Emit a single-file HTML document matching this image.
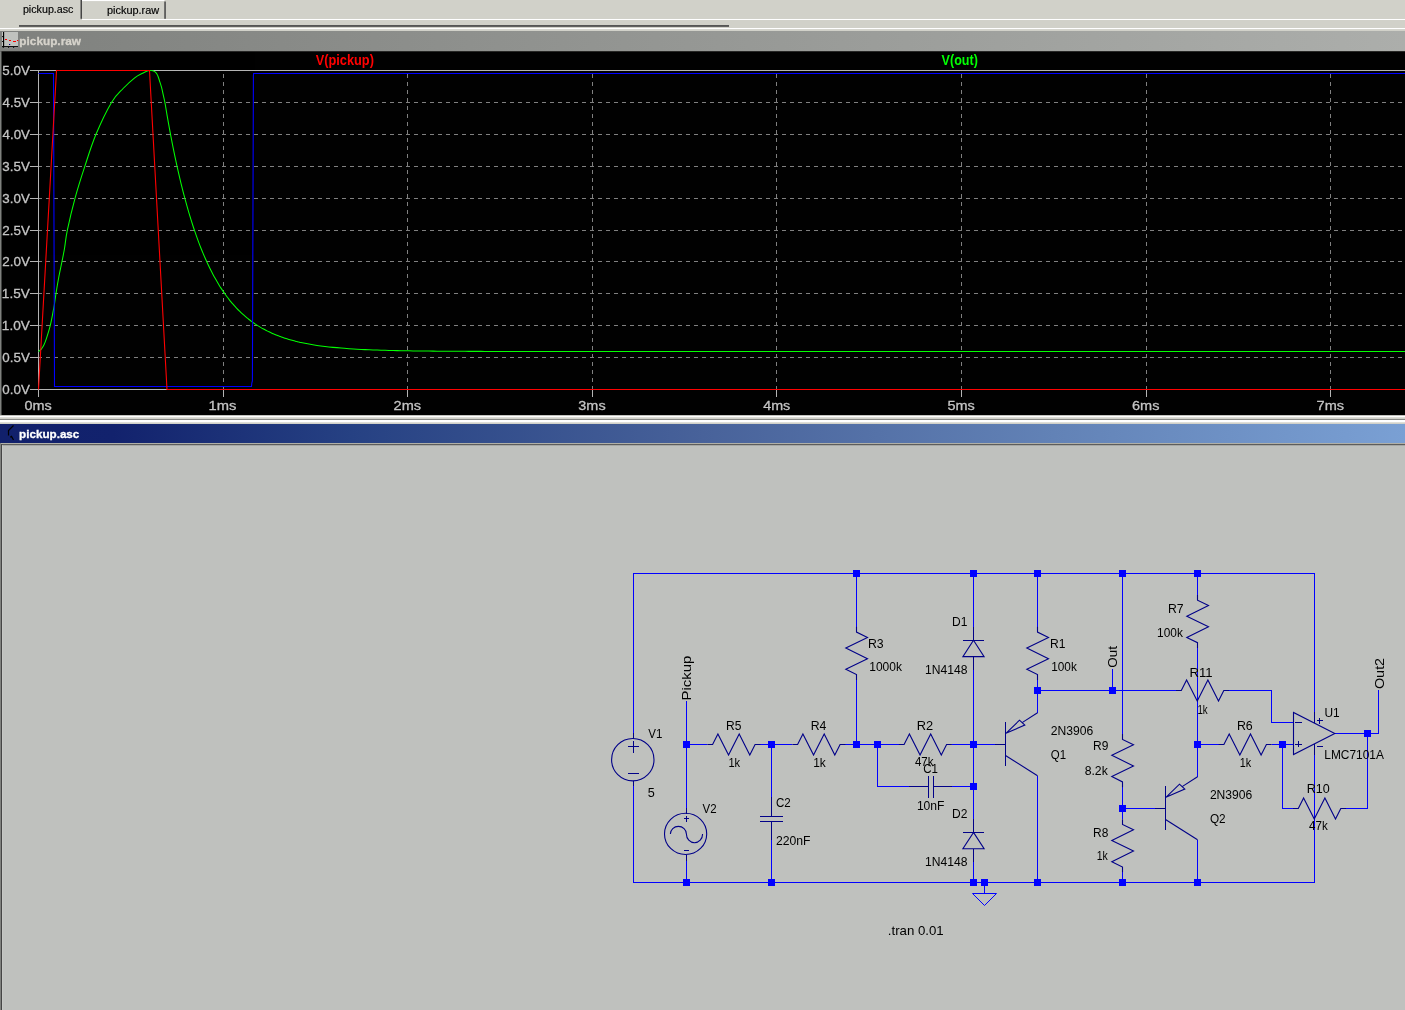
<!DOCTYPE html>
<html lang="en"><head><meta charset="utf-8"><title>LTspice IV - pickup.asc</title>
<style>
html,body{margin:0;padding:0;background:#d1d1c9;overflow:hidden}
body{width:1405px;height:1010px}
svg{display:block;font-family:"Liberation Sans",sans-serif;will-change:transform;opacity:0.9999}
</style></head><body>
<svg width="1405" height="1010" viewBox="0 0 1405 1010">
<defs>
<linearGradient id="gGray" x1="0" x2="1" y1="0" y2="0"><stop offset="0" stop-color="#7f817e"/><stop offset="1" stop-color="#acaeab"/></linearGradient>
<linearGradient id="gBlue" x1="0" x2="1" y1="0" y2="0"><stop offset="0" stop-color="#11206b"/><stop offset="0.08" stop-color="#12226d"/><stop offset="0.25" stop-color="#264183"/><stop offset="0.5" stop-color="#48629a"/><stop offset="0.75" stop-color="#6282b6"/><stop offset="1" stop-color="#7aa0d4"/></linearGradient>
</defs>
<rect x="0.00" y="0.00" width="1405.00" height="1010.00" fill="#d1d1c9"/>
<text x="22.92" y="13.00" font-size="11" fill="#000" textLength="50.56" lengthAdjust="spacingAndGlyphs" stroke="#000" stroke-width="0.15">pickup.asc</text>
<text x="107.00" y="14.00" font-size="11" fill="#000" textLength="52.16" lengthAdjust="spacingAndGlyphs" stroke="#000" stroke-width="0.15">pickup.raw</text>
<rect x="80.50" y="0.00" width="1.50" height="18.80" fill="#454545"/>
<rect x="82.00" y="0.00" width="82.50" height="1.10" fill="#ffffff"/>
<rect x="164.30" y="1.50" width="1.50" height="17.30" fill="#454545"/>
<rect x="82.00" y="19.00" width="1323.00" height="1.00" fill="#ffffff"/>
<rect x="19.00" y="25.10" width="710.00" height="1.70" fill="#484848"/>
<rect x="0.00" y="28.00" width="1405.00" height="1.10" fill="#ffffff"/>
<rect x="0.00" y="31.00" width="1405.00" height="20.20" fill="url(#gGray)"/>
<rect x="4.20" y="32.00" width="13.80" height="14.20" fill="#c0c2be"/>
<rect x="2.00" y="32.00" width="1.00" height="14.00" fill="#c0c2be"/>
<rect x="4.00" y="47.20" width="14.00" height="0.90" fill="#b0b2ae"/>
<rect x="3.00" y="32.00" width="1.10" height="15.60" fill="#000"/>
<rect x="2.00" y="46.10" width="16.00" height="1.10" fill="#000"/>
<rect x="2.00" y="36.20" width="1.20" height="0.90" fill="#000"/>
<rect x="2.00" y="41.00" width="1.20" height="0.90" fill="#000"/>
<rect x="8.20" y="47.00" width="0.90" height="1.00" fill="#000"/>
<rect x="13.20" y="47.00" width="0.90" height="1.00" fill="#000"/>
<rect x="5.00" y="39.00" width="2.00" height="1.00" fill="#ff0000"/>
<rect x="9.00" y="40.00" width="2.00" height="1.00" fill="#ff0000"/>
<rect x="13.00" y="41.00" width="3.00" height="1.00" fill="#ff0000"/>
<rect x="17.00" y="40.00" width="1.20" height="1.00" fill="#ff0000"/>
<rect x="9.00" y="44.00" width="1.20" height="1.00" fill="#000080"/>
<text x="19.33" y="45.20" font-size="11.5" fill="#d6d3cb" font-weight="bold" textLength="61.64" lengthAdjust="spacingAndGlyphs" stroke="#d6d3cb" stroke-width="0.3">pickup.raw</text>
<rect x="0.00" y="51.20" width="1405.00" height="364.10" fill="#000"/>
<rect x="0.00" y="51.20" width="1.50" height="364.10" fill="#7f817e"/>
<line x1="223.50" y1="74.00" x2="223.50" y2="389.00" stroke="#808080" stroke-width="1" shape-rendering="crispEdges" stroke-dasharray="4 4"/>
<line x1="223.50" y1="389.50" x2="223.50" y2="396.80" stroke="#b4b4b4" stroke-width="1" shape-rendering="crispEdges"/>
<line x1="407.50" y1="74.00" x2="407.50" y2="389.00" stroke="#808080" stroke-width="1" shape-rendering="crispEdges" stroke-dasharray="4 4"/>
<line x1="407.50" y1="389.50" x2="407.50" y2="396.80" stroke="#b4b4b4" stroke-width="1" shape-rendering="crispEdges"/>
<line x1="592.50" y1="74.00" x2="592.50" y2="389.00" stroke="#808080" stroke-width="1" shape-rendering="crispEdges" stroke-dasharray="4 4"/>
<line x1="592.50" y1="389.50" x2="592.50" y2="396.80" stroke="#b4b4b4" stroke-width="1" shape-rendering="crispEdges"/>
<line x1="776.50" y1="74.00" x2="776.50" y2="389.00" stroke="#808080" stroke-width="1" shape-rendering="crispEdges" stroke-dasharray="4 4"/>
<line x1="776.50" y1="389.50" x2="776.50" y2="396.80" stroke="#b4b4b4" stroke-width="1" shape-rendering="crispEdges"/>
<line x1="961.50" y1="74.00" x2="961.50" y2="389.00" stroke="#808080" stroke-width="1" shape-rendering="crispEdges" stroke-dasharray="4 4"/>
<line x1="961.50" y1="389.50" x2="961.50" y2="396.80" stroke="#b4b4b4" stroke-width="1" shape-rendering="crispEdges"/>
<line x1="1146.50" y1="74.00" x2="1146.50" y2="389.00" stroke="#808080" stroke-width="1" shape-rendering="crispEdges" stroke-dasharray="4 4"/>
<line x1="1146.50" y1="389.50" x2="1146.50" y2="396.80" stroke="#b4b4b4" stroke-width="1" shape-rendering="crispEdges"/>
<line x1="1330.50" y1="74.00" x2="1330.50" y2="389.00" stroke="#808080" stroke-width="1" shape-rendering="crispEdges" stroke-dasharray="4 4"/>
<line x1="1330.50" y1="389.50" x2="1330.50" y2="396.80" stroke="#b4b4b4" stroke-width="1" shape-rendering="crispEdges"/>
<line x1="38.00" y1="357.50" x2="1405.00" y2="357.50" stroke="#808080" stroke-width="1" shape-rendering="crispEdges" stroke-dasharray="4 4"/>
<line x1="38.00" y1="325.50" x2="1405.00" y2="325.50" stroke="#808080" stroke-width="1" shape-rendering="crispEdges" stroke-dasharray="4 4"/>
<line x1="38.00" y1="293.50" x2="1405.00" y2="293.50" stroke="#808080" stroke-width="1" shape-rendering="crispEdges" stroke-dasharray="4 4"/>
<line x1="38.00" y1="261.50" x2="1405.00" y2="261.50" stroke="#808080" stroke-width="1" shape-rendering="crispEdges" stroke-dasharray="4 4"/>
<line x1="38.00" y1="230.50" x2="1405.00" y2="230.50" stroke="#808080" stroke-width="1" shape-rendering="crispEdges" stroke-dasharray="4 4"/>
<line x1="38.00" y1="198.50" x2="1405.00" y2="198.50" stroke="#808080" stroke-width="1" shape-rendering="crispEdges" stroke-dasharray="4 4"/>
<line x1="38.00" y1="166.50" x2="1405.00" y2="166.50" stroke="#808080" stroke-width="1" shape-rendering="crispEdges" stroke-dasharray="4 4"/>
<line x1="38.00" y1="134.50" x2="1405.00" y2="134.50" stroke="#808080" stroke-width="1" shape-rendering="crispEdges" stroke-dasharray="4 4"/>
<line x1="38.00" y1="102.50" x2="1405.00" y2="102.50" stroke="#808080" stroke-width="1" shape-rendering="crispEdges" stroke-dasharray="4 4"/>
<line x1="30.30" y1="389.50" x2="38.50" y2="389.50" stroke="#b4b4b4" stroke-width="1" shape-rendering="crispEdges"/>
<text x="2.38" y="393.70" font-size="13.2" fill="#c4c4c4" textLength="27.48" lengthAdjust="spacingAndGlyphs" stroke="#c4c4c4" stroke-width="0.3">0.0V</text>
<line x1="30.30" y1="357.50" x2="38.50" y2="357.50" stroke="#b4b4b4" stroke-width="1" shape-rendering="crispEdges"/>
<text x="2.38" y="361.70" font-size="13.2" fill="#c4c4c4" textLength="27.48" lengthAdjust="spacingAndGlyphs" stroke="#c4c4c4" stroke-width="0.3">0.5V</text>
<line x1="30.30" y1="325.50" x2="38.50" y2="325.50" stroke="#b4b4b4" stroke-width="1" shape-rendering="crispEdges"/>
<text x="1.87" y="329.70" font-size="13.2" fill="#c4c4c4" textLength="27.99" lengthAdjust="spacingAndGlyphs" stroke="#c4c4c4" stroke-width="0.3">1.0V</text>
<line x1="30.30" y1="293.50" x2="38.50" y2="293.50" stroke="#b4b4b4" stroke-width="1" shape-rendering="crispEdges"/>
<text x="1.87" y="297.70" font-size="13.2" fill="#c4c4c4" textLength="27.99" lengthAdjust="spacingAndGlyphs" stroke="#c4c4c4" stroke-width="0.3">1.5V</text>
<line x1="30.30" y1="261.50" x2="38.50" y2="261.50" stroke="#b4b4b4" stroke-width="1" shape-rendering="crispEdges"/>
<text x="2.23" y="265.70" font-size="13.2" fill="#c4c4c4" textLength="27.63" lengthAdjust="spacingAndGlyphs" stroke="#c4c4c4" stroke-width="0.3">2.0V</text>
<line x1="30.30" y1="230.50" x2="38.50" y2="230.50" stroke="#b4b4b4" stroke-width="1" shape-rendering="crispEdges"/>
<text x="2.23" y="234.70" font-size="13.2" fill="#c4c4c4" textLength="27.63" lengthAdjust="spacingAndGlyphs" stroke="#c4c4c4" stroke-width="0.3">2.5V</text>
<line x1="30.30" y1="198.50" x2="38.50" y2="198.50" stroke="#b4b4b4" stroke-width="1" shape-rendering="crispEdges"/>
<text x="2.39" y="202.70" font-size="13.2" fill="#c4c4c4" textLength="27.46" lengthAdjust="spacingAndGlyphs" stroke="#c4c4c4" stroke-width="0.3">3.0V</text>
<line x1="30.30" y1="166.50" x2="38.50" y2="166.50" stroke="#b4b4b4" stroke-width="1" shape-rendering="crispEdges"/>
<text x="2.39" y="170.70" font-size="13.2" fill="#c4c4c4" textLength="27.46" lengthAdjust="spacingAndGlyphs" stroke="#c4c4c4" stroke-width="0.3">3.5V</text>
<line x1="30.30" y1="134.50" x2="38.50" y2="134.50" stroke="#b4b4b4" stroke-width="1" shape-rendering="crispEdges"/>
<text x="2.61" y="138.70" font-size="13.2" fill="#c4c4c4" textLength="27.25" lengthAdjust="spacingAndGlyphs" stroke="#c4c4c4" stroke-width="0.3">4.0V</text>
<line x1="30.30" y1="102.50" x2="38.50" y2="102.50" stroke="#b4b4b4" stroke-width="1" shape-rendering="crispEdges"/>
<text x="2.61" y="106.70" font-size="13.2" fill="#c4c4c4" textLength="27.25" lengthAdjust="spacingAndGlyphs" stroke="#c4c4c4" stroke-width="0.3">4.5V</text>
<line x1="30.30" y1="70.50" x2="38.50" y2="70.50" stroke="#b4b4b4" stroke-width="1" shape-rendering="crispEdges"/>
<text x="2.37" y="74.70" font-size="13.2" fill="#c4c4c4" textLength="27.49" lengthAdjust="spacingAndGlyphs" stroke="#c4c4c4" stroke-width="0.3">5.0V</text>
<line x1="38.50" y1="70.00" x2="38.50" y2="396.80" stroke="#b4b4b4" stroke-width="1" shape-rendering="crispEdges"/>
<line x1="38.00" y1="70.50" x2="1405.00" y2="70.50" stroke="#b4b4b4" stroke-width="1" shape-rendering="crispEdges"/>
<line x1="38.00" y1="389.50" x2="1405.00" y2="389.50" stroke="#b4b4b4" stroke-width="1" shape-rendering="crispEdges"/>
<text x="24.54" y="409.70" font-size="13.2" fill="#c4c4c4" textLength="27.29" lengthAdjust="spacingAndGlyphs" stroke="#c4c4c4" stroke-width="0.3">0ms</text>
<text x="208.58" y="409.70" font-size="13.2" fill="#c4c4c4" textLength="27.85" lengthAdjust="spacingAndGlyphs" stroke="#c4c4c4" stroke-width="0.3">1ms</text>
<text x="393.57" y="409.70" font-size="13.2" fill="#c4c4c4" textLength="27.45" lengthAdjust="spacingAndGlyphs" stroke="#c4c4c4" stroke-width="0.3">2ms</text>
<text x="578.35" y="409.70" font-size="13.2" fill="#c4c4c4" textLength="27.27" lengthAdjust="spacingAndGlyphs" stroke="#c4c4c4" stroke-width="0.3">3ms</text>
<text x="763.19" y="409.70" font-size="13.2" fill="#c4c4c4" textLength="27.03" lengthAdjust="spacingAndGlyphs" stroke="#c4c4c4" stroke-width="0.3">4ms</text>
<text x="947.52" y="409.70" font-size="13.2" fill="#c4c4c4" textLength="27.30" lengthAdjust="spacingAndGlyphs" stroke="#c4c4c4" stroke-width="0.3">5ms</text>
<text x="1131.97" y="409.70" font-size="13.2" fill="#c4c4c4" textLength="27.45" lengthAdjust="spacingAndGlyphs" stroke="#c4c4c4" stroke-width="0.3">6ms</text>
<text x="1316.56" y="409.70" font-size="13.2" fill="#c4c4c4" textLength="27.47" lengthAdjust="spacingAndGlyphs" stroke="#c4c4c4" stroke-width="0.3">7ms</text>
<path d="M38.50,351.60 C38.97,351.20 40.38,350.33 41.30,349.20 C42.22,348.07 43.10,346.73 44.00,344.80 C44.90,342.87 45.65,340.85 46.70,337.60 C47.75,334.35 49.27,329.45 50.30,325.30 C51.33,321.15 52.20,316.28 52.90,312.70 C53.60,309.12 53.98,307.03 54.50,303.80 C55.02,300.57 55.28,297.77 56.00,293.30 C56.72,288.83 57.80,282.32 58.80,277.00 C59.80,271.68 61.05,266.15 62.00,261.40 C62.95,256.65 63.62,253.67 64.50,248.50 C65.38,243.33 65.55,238.77 67.30,230.40 C69.05,222.03 72.08,208.97 75.00,198.30 C77.92,187.63 81.30,177.07 84.80,166.40 C88.30,155.73 91.55,144.97 96.00,134.30 C100.45,123.63 106.98,110.03 111.50,102.40 C116.02,94.77 119.23,92.60 123.10,88.50 C126.97,84.40 131.43,80.35 134.70,77.80 C137.97,75.25 140.48,74.37 142.70,73.20 C144.92,72.03 146.70,71.25 148.00,70.80 C149.30,70.35 149.67,70.50 150.50,70.50 C151.33,70.50 152.07,70.42 153.00,70.80 C153.93,71.18 155.28,71.93 156.10,72.80 C156.92,73.67 157.35,74.72 157.90,76.00 C158.45,77.28 158.80,78.63 159.40,80.50 C160.00,82.37 160.82,84.62 161.50,87.20 C162.18,89.78 162.92,93.37 163.50,96.00 C164.08,98.63 164.42,99.87 165.00,103.01 C165.58,106.15 166.33,110.99 167.00,114.84 C167.67,118.69 168.33,122.44 169.00,126.10 C169.67,129.77 170.33,133.34 171.00,136.84 C171.67,140.33 172.33,143.73 173.00,147.06 C173.67,150.38 174.33,153.62 175.00,156.79 C175.67,159.96 176.33,163.04 177.00,166.06 C177.67,169.08 178.33,172.02 179.00,174.89 C179.67,177.76 180.33,180.56 181.00,183.30 C181.67,186.03 182.33,188.70 183.00,191.31 C183.67,193.91 184.33,196.45 185.00,198.93 C185.67,201.41 186.33,203.83 187.00,206.20 C187.67,208.56 188.33,210.86 189.00,213.11 C189.67,215.36 190.33,217.56 191.00,219.70 C191.67,221.85 192.33,223.94 193.00,225.98 C193.67,228.02 194.33,230.01 195.00,231.95 C195.67,233.90 196.33,235.79 197.00,237.64 C197.67,239.50 198.33,241.30 199.00,243.07 C199.67,244.83 200.33,246.55 201.00,248.23 C201.67,249.91 202.33,251.54 203.00,253.14 C203.67,254.74 204.33,256.30 205.00,257.83 C205.67,259.35 206.33,260.84 207.00,262.29 C207.67,263.74 208.33,265.15 209.00,266.53 C209.67,267.92 210.33,269.26 211.00,270.58 C211.67,271.90 212.33,273.18 213.00,274.43 C213.67,275.69 214.33,276.91 215.00,278.10 C215.67,279.30 216.33,280.46 217.00,281.60 C217.67,282.73 218.33,283.84 219.00,284.92 C219.67,286.01 220.33,287.06 221.00,288.09 C221.67,289.13 222.33,290.13 223.00,291.11 C223.67,292.09 224.33,293.05 225.00,293.99 C225.67,294.92 226.33,295.83 227.00,296.73 C227.67,297.62 228.33,298.48 229.00,299.33 C229.67,300.18 230.33,301.01 231.00,301.82 C231.67,302.63 232.33,303.41 233.00,304.18 C233.67,304.95 234.33,305.70 235.00,306.44 C235.67,307.17 236.33,307.88 237.00,308.58 C237.67,309.28 238.33,309.96 239.00,310.62 C239.67,311.29 240.33,311.94 241.00,312.57 C241.67,313.20 242.33,313.82 243.00,314.42 C243.67,315.03 244.33,315.61 245.00,316.19 C245.67,316.76 246.33,317.32 247.00,317.87 C247.67,318.42 248.33,318.95 249.00,319.47 C249.67,319.99 250.33,320.50 251.00,321.00 C251.67,321.49 252.33,321.98 253.00,322.45 C253.67,322.92 254.33,323.38 255.00,323.83 C255.67,324.28 256.33,324.72 257.00,325.15 C257.67,325.58 258.33,326.00 259.00,326.40 C259.67,326.81 260.33,327.21 261.00,327.60 C261.67,327.99 262.33,328.37 263.00,328.74 C263.67,329.11 264.33,329.47 265.00,329.82 C265.67,330.17 266.33,330.52 267.00,330.85 C267.67,331.19 268.33,331.52 269.00,331.84 C269.67,332.16 270.33,332.47 271.00,332.77 C271.67,333.08 272.33,333.37 273.00,333.66 C273.67,333.95 274.33,334.24 275.00,334.51 C275.67,334.79 276.33,335.06 277.00,335.32 C277.67,335.58 278.33,335.84 279.00,336.09 C279.67,336.34 280.33,336.59 281.00,336.82 C281.67,337.06 282.33,337.30 283.00,337.52 C283.67,337.75 284.33,337.97 285.00,338.19 C285.67,338.41 286.33,338.62 287.00,338.82 C287.67,339.03 288.33,339.23 289.00,339.43 C289.67,339.62 290.33,339.81 291.00,340.00 C291.67,340.19 292.33,340.37 293.00,340.55 C293.67,340.73 294.33,340.90 295.00,341.07 C295.67,341.24 296.33,341.41 297.00,341.57 C297.67,341.73 298.33,341.89 299.00,342.04 C299.67,342.19 299.33,342.15 301.00,342.49 C302.67,342.83 306.33,343.60 309.00,344.09 C311.67,344.57 314.33,345.00 317.00,345.40 C319.67,345.80 322.33,346.15 325.00,346.48 C327.67,346.81 330.33,347.10 333.00,347.37 C335.67,347.64 338.33,347.88 341.00,348.10 C343.67,348.33 346.33,348.52 349.00,348.71 C351.67,348.89 354.33,349.05 357.00,349.20 C359.67,349.35 362.33,349.48 365.00,349.61 C367.67,349.73 370.33,349.84 373.00,349.94 C375.67,350.05 378.33,350.14 381.00,350.22 C383.67,350.30 386.33,350.38 389.00,350.45 C391.67,350.52 394.33,350.58 397.00,350.63 C399.67,350.69 402.33,350.74 405.00,350.79 C407.67,350.83 410.33,350.87 413.00,350.91 C415.67,350.95 418.33,350.99 421.00,351.02 C423.67,351.05 426.33,351.08 429.00,351.10 C431.67,351.13 434.33,351.15 437.00,351.17 C439.67,351.19 442.33,351.21 445.00,351.23 C447.67,351.25 450.33,351.26 453.00,351.28 C455.67,351.29 458.33,351.31 461.00,351.32 C463.67,351.33 466.33,351.34 469.00,351.35 C471.67,351.36 474.33,351.37 477.00,351.38 C479.67,351.38 482.33,351.39 485.00,351.40 C487.67,351.41 490.33,351.41 493.00,351.42 C495.67,351.42 498.33,351.43 501.00,351.43 C503.67,351.44 506.33,351.44 509.00,351.44 C511.67,351.45 485.17,351.44 517.00,351.45 C548.83,351.46 552.00,351.49 700.00,351.50 C848.00,351.51 1287.50,351.50 1405.00,351.50" fill="none" stroke="#00ff00" stroke-width="1.05"/>
<polyline points="38.50,73.50 53.50,73.50 54.50,386.50 251.50,386.50 251.80,383.00 252.40,381.00 253.40,76.00 253.60,73.50 1405.00,73.50" fill="none" stroke="#0000ff" stroke-width="1.1"/>
<polyline points="38.50,389.50 56.50,70.50 149.50,70.50 167.00,389.50 1405.00,389.50" fill="none" stroke="#ff0000" stroke-width="1.1"/>
<text x="315.72" y="65.00" font-size="14" fill="#ff0000" font-weight="bold" textLength="58.20" lengthAdjust="spacingAndGlyphs">V(pickup)</text>
<text x="941.62" y="65.00" font-size="14" fill="#00ff00" font-weight="bold" textLength="36.29" lengthAdjust="spacingAndGlyphs">V(out)</text>
<rect x="0.00" y="415.30" width="1405.00" height="10.00" fill="#d1d1c9"/>
<rect x="0.00" y="415.90" width="1405.00" height="1.40" fill="#ffffff"/>
<rect x="0.00" y="419.10" width="1405.00" height="0.90" fill="#80827f"/>
<rect x="0.00" y="420.00" width="1405.00" height="2.30" fill="#ffffff"/>
<rect x="0.00" y="424.00" width="1405.00" height="19.00" fill="url(#gBlue)"/>
<polyline points="13.50,425.50 8.50,430.50 8.50,435.50" fill="none" stroke="#000" stroke-width="1.2"/>
<polyline points="10.20,437.20 11.50,436.40 13.50,440.00" fill="none" stroke="#000" stroke-width="1.2"/>
<text x="19.14" y="438.10" font-size="11.5" fill="#ffffff" font-weight="bold" textLength="60.19" lengthAdjust="spacingAndGlyphs" stroke="#ffffff" stroke-width="0.3">pickup.asc</text>
<rect x="0.00" y="443.00" width="1405.00" height="1.20" fill="#b0b0a8"/>
<rect x="0.00" y="444.20" width="1405.00" height="565.80" fill="#bfc1be"/>
<rect x="0.00" y="444.20" width="1405.00" height="1.00" fill="#454545"/>
<rect x="0.00" y="443.00" width="1.00" height="567.00" fill="#80827f"/>
<rect x="1.00" y="444.20" width="1.10" height="565.80" fill="#454545"/>
<rect x="2.10" y="445.20" width="0.90" height="564.80" fill="#c9cbc8"/>
<polyline points="633.50,733.00 633.50,573.50 1314.50,573.50 1314.50,712.00" fill="none" stroke="#0000ff" stroke-width="1" shape-rendering="crispEdges"/>
<polyline points="633.50,786.00 633.50,882.50 1314.50,882.50 1314.50,754.50" fill="none" stroke="#0000ff" stroke-width="1" shape-rendering="crispEdges"/>
<polyline points="686.50,701.00 686.50,808.30" fill="none" stroke="#0000ff" stroke-width="1" shape-rendering="crispEdges"/>
<polyline points="686.50,861.00 686.50,882.50" fill="none" stroke="#0000ff" stroke-width="1" shape-rendering="crispEdges"/>
<polyline points="686.50,744.50 707.30,744.50" fill="none" stroke="#0000ff" stroke-width="1" shape-rendering="crispEdges"/>
<polyline points="760.40,744.50 792.30,744.50" fill="none" stroke="#0000ff" stroke-width="1" shape-rendering="crispEdges"/>
<polyline points="845.40,744.50 898.80,744.50" fill="none" stroke="#0000ff" stroke-width="1" shape-rendering="crispEdges"/>
<polyline points="951.90,744.50 995.00,744.50" fill="none" stroke="#0000ff" stroke-width="1" shape-rendering="crispEdges"/>
<polyline points="771.50,744.50 771.50,797.30" fill="none" stroke="#0000ff" stroke-width="1" shape-rendering="crispEdges"/>
<polyline points="771.50,839.80 771.50,882.50" fill="none" stroke="#0000ff" stroke-width="1" shape-rendering="crispEdges"/>
<polyline points="856.50,573.50 856.50,626.80" fill="none" stroke="#0000ff" stroke-width="1" shape-rendering="crispEdges"/>
<polyline points="856.50,679.90 856.50,744.50" fill="none" stroke="#0000ff" stroke-width="1" shape-rendering="crispEdges"/>
<polyline points="877.50,744.50 877.50,786.50 909.00,786.50" fill="none" stroke="#0000ff" stroke-width="1" shape-rendering="crispEdges"/>
<polyline points="951.50,786.50 973.50,786.50" fill="none" stroke="#0000ff" stroke-width="1" shape-rendering="crispEdges"/>
<polyline points="973.50,573.50 973.50,627.00" fill="none" stroke="#0000ff" stroke-width="1" shape-rendering="crispEdges"/>
<polyline points="973.50,669.50 973.50,818.60" fill="none" stroke="#0000ff" stroke-width="1" shape-rendering="crispEdges"/>
<polyline points="973.50,861.10 973.50,882.50" fill="none" stroke="#0000ff" stroke-width="1" shape-rendering="crispEdges"/>
<polyline points="984.50,882.50 984.50,893.50" fill="none" stroke="#0000ff" stroke-width="1" shape-rendering="crispEdges"/>
<polygon points="972.50,893.50 996.50,893.50 984.50,905.50" fill="none" stroke="#0000ff" stroke-width="1"/>
<polyline points="1037.50,573.50 1037.50,626.80" fill="none" stroke="#0000ff" stroke-width="1" shape-rendering="crispEdges"/>
<polyline points="1037.50,679.90 1037.50,712.70" fill="none" stroke="#0000ff" stroke-width="1" shape-rendering="crispEdges"/>
<polyline points="1037.50,775.70 1037.50,882.50" fill="none" stroke="#0000ff" stroke-width="1" shape-rendering="crispEdges"/>
<polyline points="1037.50,690.50 1176.00,690.50" fill="none" stroke="#0000ff" stroke-width="1" shape-rendering="crispEdges"/>
<polyline points="1229.10,690.50 1271.50,690.50 1271.50,722.50 1293.50,722.50" fill="none" stroke="#0000ff" stroke-width="1" shape-rendering="crispEdges"/>
<polyline points="1112.50,669.30 1112.50,690.50" fill="none" stroke="#0000ff" stroke-width="1" shape-rendering="crispEdges"/>
<polyline points="1122.50,573.50 1122.50,734.10" fill="none" stroke="#0000ff" stroke-width="1" shape-rendering="crispEdges"/>
<polyline points="1122.50,787.20 1122.50,819.20" fill="none" stroke="#0000ff" stroke-width="1" shape-rendering="crispEdges"/>
<polyline points="1122.50,872.30 1122.50,882.50" fill="none" stroke="#0000ff" stroke-width="1" shape-rendering="crispEdges"/>
<polyline points="1122.50,808.50 1155.00,808.50" fill="none" stroke="#0000ff" stroke-width="1" shape-rendering="crispEdges"/>
<polyline points="1197.50,573.50 1197.50,594.90" fill="none" stroke="#0000ff" stroke-width="1" shape-rendering="crispEdges"/>
<polyline points="1197.50,648.00 1197.50,776.50" fill="none" stroke="#0000ff" stroke-width="1" shape-rendering="crispEdges"/>
<polyline points="1197.50,840.00 1197.50,882.50" fill="none" stroke="#0000ff" stroke-width="1" shape-rendering="crispEdges"/>
<polyline points="1197.50,744.50 1218.60,744.50" fill="none" stroke="#0000ff" stroke-width="1" shape-rendering="crispEdges"/>
<polyline points="1271.70,744.50 1293.50,744.50" fill="none" stroke="#0000ff" stroke-width="1" shape-rendering="crispEdges"/>
<polyline points="1282.50,744.50 1282.50,808.50 1293.00,808.50" fill="none" stroke="#0000ff" stroke-width="1" shape-rendering="crispEdges"/>
<polyline points="1346.10,808.50 1367.50,808.50 1367.50,733.50" fill="none" stroke="#0000ff" stroke-width="1" shape-rendering="crispEdges"/>
<polyline points="1335.00,733.50 1378.50,733.50 1378.50,690.00" fill="none" stroke="#0000ff" stroke-width="1" shape-rendering="crispEdges"/>
<polyline points="856.50,626.80 856.50,632.10 867.50,637.40 845.80,648.05 867.50,658.70 845.80,669.30 856.50,674.60 856.50,679.90" fill="none" stroke="#000088" stroke-width="1.1"/>
<polyline points="1037.50,626.80 1037.50,632.10 1048.50,637.40 1026.80,648.05 1048.50,658.70 1026.80,669.30 1037.50,674.60 1037.50,679.90" fill="none" stroke="#000088" stroke-width="1.1"/>
<polyline points="1197.50,594.90 1197.50,600.20 1208.50,605.50 1186.80,616.15 1208.50,626.80 1186.80,637.40 1197.50,642.70 1197.50,648.00" fill="none" stroke="#000088" stroke-width="1.1"/>
<polyline points="1122.50,734.10 1122.50,739.40 1133.50,744.70 1111.80,755.35 1133.50,766.00 1111.80,776.60 1122.50,781.90 1122.50,787.20" fill="none" stroke="#000088" stroke-width="1.1"/>
<polyline points="1122.50,819.20 1122.50,824.50 1133.50,829.80 1111.80,840.45 1133.50,851.10 1111.80,861.70 1122.50,867.00 1122.50,872.30" fill="none" stroke="#000088" stroke-width="1.1"/>
<polyline points="707.30,744.50 712.60,744.50 717.90,733.90 728.55,755.10 739.20,733.90 749.80,755.10 755.10,744.50 760.40,744.50" fill="none" stroke="#000088" stroke-width="1.1"/>
<polyline points="792.30,744.50 797.60,744.50 802.90,733.90 813.55,755.10 824.20,733.90 834.80,755.10 840.10,744.50 845.40,744.50" fill="none" stroke="#000088" stroke-width="1.1"/>
<polyline points="898.80,744.50 904.10,744.50 909.40,733.90 920.05,755.10 930.70,733.90 941.30,755.10 946.60,744.50 951.90,744.50" fill="none" stroke="#000088" stroke-width="1.1"/>
<polyline points="1176.00,690.50 1181.30,690.50 1186.60,679.90 1197.25,701.10 1207.90,679.90 1218.50,701.10 1223.80,690.50 1229.10,690.50" fill="none" stroke="#000088" stroke-width="1.1"/>
<polyline points="1218.60,744.50 1223.90,744.50 1229.20,733.90 1239.85,755.10 1250.50,733.90 1261.10,755.10 1266.40,744.50 1271.70,744.50" fill="none" stroke="#000088" stroke-width="1.1"/>
<polyline points="1293.00,808.50 1298.30,808.50 1303.60,797.90 1314.25,819.10 1324.90,797.90 1335.50,819.10 1340.80,808.50 1346.10,808.50" fill="none" stroke="#000088" stroke-width="1.1"/>
<polyline points="973.50,627.00 973.50,640.30" fill="none" stroke="#000088" stroke-width="1.1" shape-rendering="crispEdges"/>
<polyline points="962.90,640.30 984.10,640.30" fill="none" stroke="#000088" stroke-width="1.1" shape-rendering="crispEdges"/>
<polygon points="973.50,640.30 984.10,656.60 962.90,656.60" fill="none" stroke="#000088" stroke-width="1.1"/>
<polyline points="973.50,656.60 973.50,669.50" fill="none" stroke="#000088" stroke-width="1.1" shape-rendering="crispEdges"/>
<polyline points="973.50,819.10 973.50,832.40" fill="none" stroke="#000088" stroke-width="1.1" shape-rendering="crispEdges"/>
<polyline points="962.90,832.40 984.10,832.40" fill="none" stroke="#000088" stroke-width="1.1" shape-rendering="crispEdges"/>
<polygon points="973.50,832.40 984.10,848.70 962.90,848.70" fill="none" stroke="#000088" stroke-width="1.1"/>
<polyline points="973.50,848.70 973.50,861.60" fill="none" stroke="#000088" stroke-width="1.1" shape-rendering="crispEdges"/>
<polyline points="771.50,797.30 771.50,816.50" fill="none" stroke="#000088" stroke-width="1.1" shape-rendering="crispEdges"/>
<polyline points="760.00,816.50 783.00,816.50" fill="none" stroke="#000088" stroke-width="1.1" shape-rendering="crispEdges"/>
<polyline points="760.00,821.50 783.00,821.50" fill="none" stroke="#000088" stroke-width="1.1" shape-rendering="crispEdges"/>
<polyline points="771.50,821.50 771.50,839.80" fill="none" stroke="#000088" stroke-width="1.1" shape-rendering="crispEdges"/>
<polyline points="909.00,786.50 928.50,786.50" fill="none" stroke="#000088" stroke-width="1.1" shape-rendering="crispEdges"/>
<polyline points="928.50,776.00 928.50,798.00" fill="none" stroke="#000088" stroke-width="1.1" shape-rendering="crispEdges"/>
<polyline points="933.50,776.00 933.50,798.00" fill="none" stroke="#000088" stroke-width="1.1" shape-rendering="crispEdges"/>
<polyline points="933.50,786.50 951.50,786.50" fill="none" stroke="#000088" stroke-width="1.1" shape-rendering="crispEdges"/>
<circle cx="632.8" cy="759.7" r="21.2" fill="none" stroke="#000088" stroke-width="1.1"/>
<polyline points="633.50,733.00 633.50,738.50" fill="none" stroke="#000088" stroke-width="1.1" shape-rendering="crispEdges"/>
<polyline points="633.50,781.00 633.50,786.00" fill="none" stroke="#000088" stroke-width="1.1" shape-rendering="crispEdges"/>
<polyline points="627.50,746.50 639.00,746.50" fill="none" stroke="#000088" stroke-width="1.1" shape-rendering="crispEdges"/>
<polyline points="633.50,741.00 633.50,752.50" fill="none" stroke="#000088" stroke-width="1.1" shape-rendering="crispEdges"/>
<polyline points="627.50,773.50 639.00,773.50" fill="none" stroke="#000088" stroke-width="1.1" shape-rendering="crispEdges"/>
<ellipse cx="685.6" cy="833.9" rx="21.1" ry="20.6" fill="none" stroke="#000088" stroke-width="1.1"/>
<polyline points="686.50,808.30 686.50,813.50" fill="none" stroke="#000088" stroke-width="1.1" shape-rendering="crispEdges"/>
<polyline points="686.50,854.50 686.50,861.00" fill="none" stroke="#000088" stroke-width="1.1" shape-rendering="crispEdges"/>
<polyline points="683.50,818.50 689.20,818.50" fill="none" stroke="#000088" stroke-width="1.1" shape-rendering="crispEdges"/>
<polyline points="686.50,816.00 686.50,821.50" fill="none" stroke="#000088" stroke-width="1.1" shape-rendering="crispEdges"/>
<polyline points="683.50,850.50 689.20,850.50" fill="none" stroke="#000088" stroke-width="1.1" shape-rendering="crispEdges"/>
<path d="M670.4,834 A8,7.6 0 0 1 686.4,834 A8,8.6 0 0 0 702.6,834" fill="none" stroke="#000088" stroke-width="1.1"/>
<polyline points="995.00,744.50 1005.50,744.50" fill="none" stroke="#000088" stroke-width="1.1" shape-rendering="crispEdges"/>
<polyline points="1005.50,721.60 1005.50,766.00" fill="none" stroke="#000088" stroke-width="1.1" shape-rendering="crispEdges"/>
<polyline points="1037.50,712.70 1022.15,722.65" fill="none" stroke="#000088" stroke-width="1.1"/>
<polyline points="1005.50,755.50 1037.50,775.70" fill="none" stroke="#000088" stroke-width="1.1"/>
<polygon points="1005.90,733.30 1019.50,720.20 1024.80,725.10" fill="none" stroke="#000088" stroke-width="1.1"/>
<polyline points="1155.00,808.50 1165.50,808.50" fill="none" stroke="#000088" stroke-width="1.1" shape-rendering="crispEdges"/>
<polyline points="1165.50,785.60 1165.50,830.00" fill="none" stroke="#000088" stroke-width="1.1" shape-rendering="crispEdges"/>
<polyline points="1197.50,776.70 1182.15,786.65" fill="none" stroke="#000088" stroke-width="1.1"/>
<polyline points="1165.50,819.50 1197.50,839.70" fill="none" stroke="#000088" stroke-width="1.1"/>
<polygon points="1165.90,797.30 1179.50,784.20 1184.80,789.10" fill="none" stroke="#000088" stroke-width="1.1"/>
<polygon points="1293.50,712.40 1293.50,754.60 1334.80,733.50" fill="none" stroke="#000088" stroke-width="1.1"/>
<polyline points="1314.50,712.00 1314.50,723.00" fill="none" stroke="#000088" stroke-width="1.1" shape-rendering="crispEdges"/>
<polyline points="1314.50,744.00 1314.50,754.50" fill="none" stroke="#000088" stroke-width="1.1" shape-rendering="crispEdges"/>
<polyline points="1295.30,722.50 1302.00,722.50" fill="none" stroke="#000088" stroke-width="1.1" shape-rendering="crispEdges"/>
<polyline points="1295.30,744.50 1302.00,744.50" fill="none" stroke="#000088" stroke-width="1.1" shape-rendering="crispEdges"/>
<polyline points="1298.50,741.00 1298.50,747.00" fill="none" stroke="#000088" stroke-width="1.1" shape-rendering="crispEdges"/>
<polyline points="1317.30,720.50 1323.00,720.50" fill="none" stroke="#000088" stroke-width="1.1" shape-rendering="crispEdges"/>
<polyline points="1319.50,717.50 1319.50,723.50" fill="none" stroke="#000088" stroke-width="1.1" shape-rendering="crispEdges"/>
<polyline points="1317.30,746.50 1323.00,746.50" fill="none" stroke="#000088" stroke-width="1.1" shape-rendering="crispEdges"/>
<rect x="853.00" y="570.00" width="7.00" height="7.00" fill="#0000ff" shape-rendering="crispEdges"/>
<rect x="970.00" y="570.00" width="7.00" height="7.00" fill="#0000ff" shape-rendering="crispEdges"/>
<rect x="1034.00" y="570.00" width="7.00" height="7.00" fill="#0000ff" shape-rendering="crispEdges"/>
<rect x="1119.00" y="570.00" width="7.00" height="7.00" fill="#0000ff" shape-rendering="crispEdges"/>
<rect x="1194.00" y="570.00" width="7.00" height="7.00" fill="#0000ff" shape-rendering="crispEdges"/>
<rect x="683.00" y="741.00" width="7.00" height="7.00" fill="#0000ff" shape-rendering="crispEdges"/>
<rect x="768.00" y="741.00" width="7.00" height="7.00" fill="#0000ff" shape-rendering="crispEdges"/>
<rect x="853.00" y="741.00" width="7.00" height="7.00" fill="#0000ff" shape-rendering="crispEdges"/>
<rect x="874.00" y="741.00" width="7.00" height="7.00" fill="#0000ff" shape-rendering="crispEdges"/>
<rect x="970.00" y="741.00" width="7.00" height="7.00" fill="#0000ff" shape-rendering="crispEdges"/>
<rect x="970.00" y="783.00" width="7.00" height="7.00" fill="#0000ff" shape-rendering="crispEdges"/>
<rect x="1034.00" y="687.00" width="7.00" height="7.00" fill="#0000ff" shape-rendering="crispEdges"/>
<rect x="1109.00" y="687.00" width="7.00" height="7.00" fill="#0000ff" shape-rendering="crispEdges"/>
<rect x="1119.00" y="805.00" width="7.00" height="7.00" fill="#0000ff" shape-rendering="crispEdges"/>
<rect x="1194.00" y="741.00" width="7.00" height="7.00" fill="#0000ff" shape-rendering="crispEdges"/>
<rect x="1279.00" y="741.00" width="7.00" height="7.00" fill="#0000ff" shape-rendering="crispEdges"/>
<rect x="1364.00" y="730.00" width="7.00" height="7.00" fill="#0000ff" shape-rendering="crispEdges"/>
<rect x="683.00" y="879.00" width="7.00" height="7.00" fill="#0000ff" shape-rendering="crispEdges"/>
<rect x="768.00" y="879.00" width="7.00" height="7.00" fill="#0000ff" shape-rendering="crispEdges"/>
<rect x="970.00" y="879.00" width="7.00" height="7.00" fill="#0000ff" shape-rendering="crispEdges"/>
<rect x="981.00" y="879.00" width="7.00" height="7.00" fill="#0000ff" shape-rendering="crispEdges"/>
<rect x="1034.00" y="879.00" width="7.00" height="7.00" fill="#0000ff" shape-rendering="crispEdges"/>
<rect x="1119.00" y="879.00" width="7.00" height="7.00" fill="#0000ff" shape-rendering="crispEdges"/>
<rect x="1194.00" y="879.00" width="7.00" height="7.00" fill="#0000ff" shape-rendering="crispEdges"/>
<text x="648.35" y="737.80" font-size="13" fill="#000" textLength="14.10" lengthAdjust="spacingAndGlyphs">V1</text>
<text x="647.69" y="796.60" font-size="13" fill="#000" textLength="7.03" lengthAdjust="spacingAndGlyphs">5</text>
<text x="702.55" y="812.70" font-size="13" fill="#000" textLength="14.02" lengthAdjust="spacingAndGlyphs">V2</text>
<text x="726.11" y="729.80" font-size="13" fill="#000" textLength="15.38" lengthAdjust="spacingAndGlyphs">R5</text>
<text x="728.46" y="767.00" font-size="13" fill="#000" textLength="11.72" lengthAdjust="spacingAndGlyphs">1k</text>
<text x="810.70" y="729.90" font-size="13" fill="#000" textLength="15.66" lengthAdjust="spacingAndGlyphs">R4</text>
<text x="813.19" y="766.80" font-size="13" fill="#000" textLength="12.58" lengthAdjust="spacingAndGlyphs">1k</text>
<text x="775.92" y="806.60" font-size="13" fill="#000" textLength="14.76" lengthAdjust="spacingAndGlyphs">C2</text>
<text x="775.89" y="844.50" font-size="13" fill="#000" textLength="34.59" lengthAdjust="spacingAndGlyphs">220nF</text>
<text x="867.99" y="647.70" font-size="13" fill="#000" textLength="15.74" lengthAdjust="spacingAndGlyphs">R3</text>
<text x="869.29" y="670.80" font-size="13" fill="#000" textLength="32.68" lengthAdjust="spacingAndGlyphs">1000k</text>
<text x="952.11" y="625.80" font-size="13" fill="#000" textLength="15.37" lengthAdjust="spacingAndGlyphs">D1</text>
<text x="925.08" y="674.00" font-size="13" fill="#000" textLength="42.44" lengthAdjust="spacingAndGlyphs">1N4148</text>
<text x="1050.11" y="647.70" font-size="13" fill="#000" textLength="15.48" lengthAdjust="spacingAndGlyphs">R1</text>
<text x="1051.20" y="670.80" font-size="13" fill="#000" textLength="25.68" lengthAdjust="spacingAndGlyphs">100k</text>
<text x="916.75" y="729.80" font-size="13" fill="#000" textLength="16.40" lengthAdjust="spacingAndGlyphs">R2</text>
<text x="914.95" y="766.40" font-size="13" fill="#000" textLength="18.53" lengthAdjust="spacingAndGlyphs">47k</text>
<text x="923.22" y="773.30" font-size="13" fill="#000" textLength="14.73" lengthAdjust="spacingAndGlyphs">C1</text>
<text x="916.88" y="810.20" font-size="13" fill="#000" textLength="27.61" lengthAdjust="spacingAndGlyphs">10nF</text>
<text x="952.11" y="818.00" font-size="13" fill="#000" textLength="15.39" lengthAdjust="spacingAndGlyphs">D2</text>
<text x="925.08" y="865.70" font-size="13" fill="#000" textLength="42.44" lengthAdjust="spacingAndGlyphs">1N4148</text>
<text x="1050.79" y="734.50" font-size="13" fill="#000" textLength="42.53" lengthAdjust="spacingAndGlyphs">2N3906</text>
<text x="1050.86" y="758.75" font-size="13" fill="#000" textLength="15.29" lengthAdjust="spacingAndGlyphs">Q1</text>
<text x="1093.02" y="750.40" font-size="13" fill="#000" textLength="15.35" lengthAdjust="spacingAndGlyphs">R9</text>
<text x="1084.67" y="775.20" font-size="13" fill="#000" textLength="23.10" lengthAdjust="spacingAndGlyphs">8.2k</text>
<text x="1093.02" y="836.50" font-size="13" fill="#000" textLength="15.30" lengthAdjust="spacingAndGlyphs">R8</text>
<text x="1096.70" y="860.10" font-size="13" fill="#000" textLength="11.08" lengthAdjust="spacingAndGlyphs">1k</text>
<text x="1167.90" y="612.70" font-size="13" fill="#000" textLength="15.62" lengthAdjust="spacingAndGlyphs">R7</text>
<text x="1157.10" y="636.60" font-size="13" fill="#000" textLength="25.79" lengthAdjust="spacingAndGlyphs">100k</text>
<text x="1189.52" y="676.80" font-size="13" fill="#000" textLength="23.11" lengthAdjust="spacingAndGlyphs">R11</text>
<text x="1197.46" y="713.70" font-size="13" fill="#000" textLength="10.22" lengthAdjust="spacingAndGlyphs">1k</text>
<text x="1236.88" y="729.80" font-size="13" fill="#000" textLength="15.85" lengthAdjust="spacingAndGlyphs">R6</text>
<text x="1239.68" y="766.70" font-size="13" fill="#000" textLength="11.40" lengthAdjust="spacingAndGlyphs">1k</text>
<text x="1324.39" y="716.90" font-size="13" fill="#000" textLength="15.19" lengthAdjust="spacingAndGlyphs">U1</text>
<text x="1324.32" y="758.70" font-size="13" fill="#000" textLength="59.60" lengthAdjust="spacingAndGlyphs">LMC7101A</text>
<text x="1306.77" y="793.30" font-size="13" fill="#000" textLength="23.01" lengthAdjust="spacingAndGlyphs">R10</text>
<text x="1309.05" y="830.20" font-size="13" fill="#000" textLength="18.63" lengthAdjust="spacingAndGlyphs">47k</text>
<text x="1209.89" y="798.80" font-size="13" fill="#000" textLength="42.43" lengthAdjust="spacingAndGlyphs">2N3906</text>
<text x="1209.95" y="822.60" font-size="13" fill="#000" textLength="15.74" lengthAdjust="spacingAndGlyphs">Q2</text>
<text x="887.80" y="934.70" font-size="13" fill="#000" textLength="55.94" lengthAdjust="spacingAndGlyphs">.tran 0.01</text>
<text transform="translate(691.20 699.30) rotate(-90)" x="-1.23" y="0" font-size="13.3" fill="#000" textLength="44.84" lengthAdjust="spacingAndGlyphs">Pickup</text>
<text transform="translate(1117.40 667.10) rotate(-90)" x="-0.63" y="0" font-size="13.3" fill="#000" textLength="21.73" lengthAdjust="spacingAndGlyphs">Out</text>
<text transform="translate(1383.80 688.40) rotate(-90)" x="-0.68" y="0" font-size="13.3" fill="#000" textLength="31.20" lengthAdjust="spacingAndGlyphs">Out2</text>
</svg>
</body></html>
